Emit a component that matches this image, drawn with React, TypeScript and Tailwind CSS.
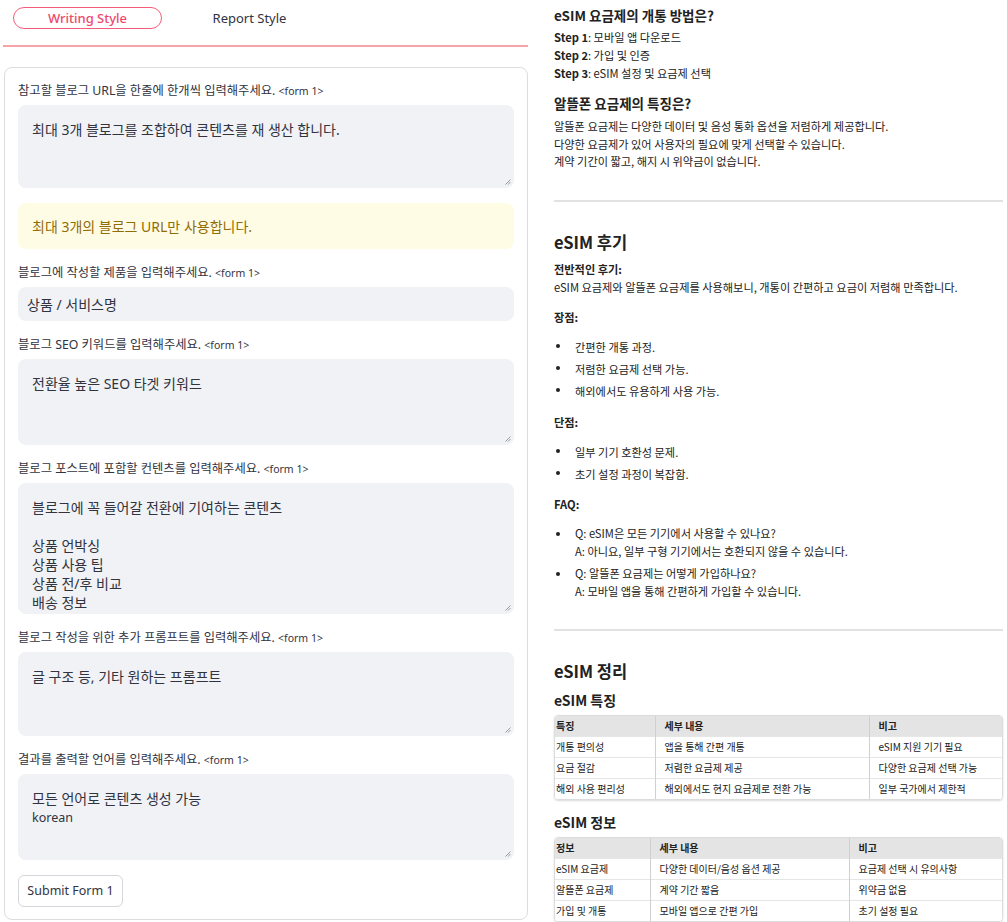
import React from "react";

const Grip = () => (
  <svg className="absolute right-[3px] bottom-[3px]" width="7" height="7" viewBox="0 0 7 7">
    <path d="M6.5 1.5 L1.5 6.5 M6.5 4 L4 6.5" stroke="#9a9aa0" strokeWidth="1" />
  </svg>
);

const Label = ({ text }: { text: string }) => (
  <div className="h-[18px] leading-[18px] text-[12.3px] text-[#31333f] mb-[5px]">
    {text} <span className="text-[10.5px]">&lt;form 1&gt;</span>
  </div>
);

const Area = ({ h, lines }: { h: string; lines: string[] }) => (
  <div className={`relative ${h} rounded-lg bg-[#f0f2f6] px-[14px] pt-[15px] text-[14px] leading-[19px] text-[#31333f] overflow-hidden`}>
    {lines.map((l, i) => (
      <div key={i} className="h-[19px] whitespace-pre">{l}</div>
    ))}
    <Grip />
  </div>
);

const Bullet = ({ children }: { children: React.ReactNode }) => (
  <div className="flex">
    <div className="w-[21px] shrink-0 flex justify-start pl-[2px] pt-[8px]">
      <span className="block w-[4px] h-[4px] rounded-full bg-[#222]" />
    </div>
    <div>{children}</div>
  </div>
);

const Table = ({ cols, rows }: { cols: string[]; rows: string[][] }) => (
  <div className="rounded-[4px] border border-[#dcdcdc] shadow-[0_1px_2px_rgba(0,0,0,0.15)] overflow-hidden">
    <table className="w-full border-collapse text-[10px] text-[#222] table-fixed">
      <colgroup>
        {cols.map((c, i) => (
          <col key={i} className={c} />
        ))}
      </colgroup>
      <tbody>
        {rows.map((r, ri) => (
          <tr key={ri} className={ri === 0 ? "bg-[#e4e4e4] font-bold h-[20px]" : "bg-white h-[20.5px] border-t border-[#e6e6e6]"}>
            {r.map((c, ci) => (
              <td
                key={ci}
                className={`${ci === 0 ? "pl-[1px]" : "pl-[9px] border-l border-[#d0d0d0]"} leading-[20px] whitespace-nowrap`}
              >
                {c}
              </td>
            ))}
          </tr>
        ))}
      </tbody>
    </table>
  </div>
);

export default function App() {
  return (
    <div className="flex w-[1007px] min-h-[922px] bg-white font-['Noto_Sans','Noto_Sans_CJK_KR',sans-serif]">
      {/* left column */}
      <div className="w-[525px] ml-[3px] shrink-0">
        <div className="h-[45px] flex items-start gap-[13px] pl-[10px]">
          <div className="mt-[7px] w-[149px] h-[22px] rounded-full border border-[#f35c7a] text-[#f0486b] text-[13px] font-medium leading-[20px] text-center">
            Writing Style
          </div>
          <div className="mt-[7px] w-[149px] h-[22px] text-[#31333f] text-[13px] leading-[22px] text-center">
            Report Style
          </div>
        </div>
        <div className="h-[2px] bg-[#f8a3a6]" />

        <div className="mt-[20px] ml-px w-[524px] rounded-lg border border-[#dddde0] px-[13px] pt-[14px] pb-[12px] flex flex-col gap-[15px]">
          <div>
            <Label text="참고할 블로그 URL을 한줄에 한개씩 입력해주세요." />
            <Area h="h-[83px]" lines={["최대 3개 블로그를 조합하여 콘텐츠를 재 생산 합니다."]} />
          </div>

          <div className="h-[46px] rounded-lg bg-[#fffce6] px-[14px] flex items-center text-[14px] text-[#926c05]">
            최대 3개의 블로그 URL만 사용합니다.
          </div>

          <div>
            <Label text="블로그에 작성할 제품을 입력해주세요." />
            <div className="h-[34px] rounded-lg bg-[#f0f2f6] px-[9px] flex items-center text-[14px] text-[#31333f]">
              상품 / 서비스명
            </div>
          </div>

          <div>
            <Label text="블로그 SEO 키워드를 입력해주세요." />
            <Area h="h-[86px]" lines={["전환율 높은 SEO 타겟 키워드"]} />
          </div>

          <div>
            <Label text="블로그 포스트에 포함할 컨텐츠를 입력해주세요." />
            <Area
              h="h-[131px]"
              lines={["블로그에 꼭 들어갈 전환에 기여하는 콘텐츠", " ", "상품 언박싱", "상품 사용 팁", "상품 전/후 비교", "배송 정보"]}
            />
          </div>

          <div>
            <Label text="블로그 작성을 위한 추가 프롬프트를 입력해주세요." />
            <Area h="h-[84px]" lines={["글 구조 등, 기타 원하는 프롬프트"]} />
          </div>

          <div>
            <Label text="결과를 출력할 언어를 입력해주세요." />
            <div className="relative h-[86px] rounded-lg bg-[#f0f2f6] px-[14px] pt-[15px] text-[#31333f] leading-[19px]">
              <div className="text-[14px]">모든 언어로 콘텐츠 생성 가능</div>
              <div className="text-[12.5px]">korean</div>
              <Grip />
            </div>
          </div>

          <div>
            <button className="w-[105px] h-[32px] rounded-md border border-[#d5d6db] bg-white text-[12.5px] text-[#31333f]">
              Submit Form 1
            </button>
          </div>
        </div>
      </div>

      {/* right column */}
      <div className="ml-[26px] w-[449px] shrink-0 text-[11.2px] text-[#222] font-['Noto_Sans_CJK_KR','Noto_Sans',sans-serif]">
        <div className="mt-[5px] text-[13.5px] font-bold leading-[20px]">eSIM 요금제의 개통 방법은?</div>
        <div className="mt-[3px] leading-[18px]">
          <div><b>Step 1</b>: 모바일 앱 다운로드</div>
          <div><b>Step 2</b>: 가입 및 인증</div>
          <div><b>Step 3</b>: eSIM 설정 및 요금제 선택</div>
        </div>
        <div className="mt-[11px] text-[13.5px] font-bold leading-[20px]">알뜰폰 요금제의 특징은?</div>
        <div className="mt-[5px] leading-[17.5px]">
          <div>알뜰폰 요금제는 다양한 데이터 및 음성 통화 옵션을 저렴하게 제공합니다.</div>
          <div>다양한 요금제가 있어 사용자의 필요에 맞게 선택할 수 있습니다.</div>
          <div>계약 기간이 짧고, 해지 시 위약금이 없습니다.</div>
        </div>

        <div className="mt-[29px] h-[2px] bg-[#e2e2e2]" />

        <div className="mt-[28px] text-[16.5px] font-bold leading-[24px]">eSIM 후기</div>
        <div className="mt-[6px] leading-[18px]">
          <div className="font-bold">전반적인 후기:</div>
          <div>eSIM 요금제와 알뜰폰 요금제를 사용해보니, 개통이 간편하고 요금이 저렴해 만족합니다.</div>
        </div>
        <div className="mt-[12px] leading-[18px] font-bold">장점:</div>
        <div className="mt-[10px] leading-[22px]">
          <Bullet>간편한 개통 과정.</Bullet>
          <Bullet>저렴한 요금제 선택 가능.</Bullet>
          <Bullet>해외에서도 유용하게 사용 가능.</Bullet>
        </div>
        <div className="mt-[11px] leading-[18px] font-bold">단점:</div>
        <div className="mt-[10px] leading-[22px]">
          <Bullet>일부 기기 호환성 문제.</Bullet>
          <Bullet>초기 설정 과정이 복잡함.</Bullet>
        </div>
        <div className="mt-[10px] leading-[18px] font-bold">FAQ:</div>
        <div className="mt-[11px] leading-[18px] flex flex-col gap-[4px]">
          <Bullet>
            <div>Q: eSIM은 모든 기기에서 사용할 수 있나요?</div>
            <div>A: 아니요, 일부 구형 기기에서는 호환되지 않을 수 있습니다.</div>
          </Bullet>
          <Bullet>
            <div>Q: 알뜰폰 요금제는 어떻게 가입하나요?</div>
            <div>A: 모바일 앱을 통해 간편하게 가입할 수 있습니다.</div>
          </Bullet>
        </div>

        <div className="mt-[29px] h-[2px] bg-[#e2e2e2]" />

        <div className="mt-[28px] text-[16.5px] font-bold leading-[24px]">eSIM 정리</div>
        <div className="mt-[7px] text-[14px] font-bold leading-[20px]">eSIM 특징</div>
        <div className="mt-[5px]">
          <Table
            cols={["w-[100px]", "w-[214px]", "w-[135px]"]}
            rows={[
              ["특징", "세부 내용", "비고"],
              ["개통 편의성", "앱을 통해 간편 개통", "eSIM 지원 기기 필요"],
              ["요금 절감", "저렴한 요금제 제공", "다양한 요금제 선택 가능"],
              ["해외 사용 편리성", "해외에서도 현지 요금제로 전환 가능", "일부 국가에서 제한적"],
            ]}
          />
        </div>
        <div className="mt-[12px] text-[14px] font-bold leading-[20px]">eSIM 정보</div>
        <div className="mt-[5px]">
          <Table
            cols={["w-[95px]", "w-[199px]", "w-[155px]"]}
            rows={[
              ["정보", "세부 내용", "비고"],
              ["eSIM 요금제", "다양한 데이터/음성 옵션 제공", "요금제 선택 시 유의사항"],
              ["알뜰폰 요금제", "계약 기간 짧음", "위약금 없음"],
              ["가입 및 개통", "모바일 앱으로 간편 가입", "초기 설정 필요"],
            ]}
          />
        </div>
      </div>
    </div>
  );
}
